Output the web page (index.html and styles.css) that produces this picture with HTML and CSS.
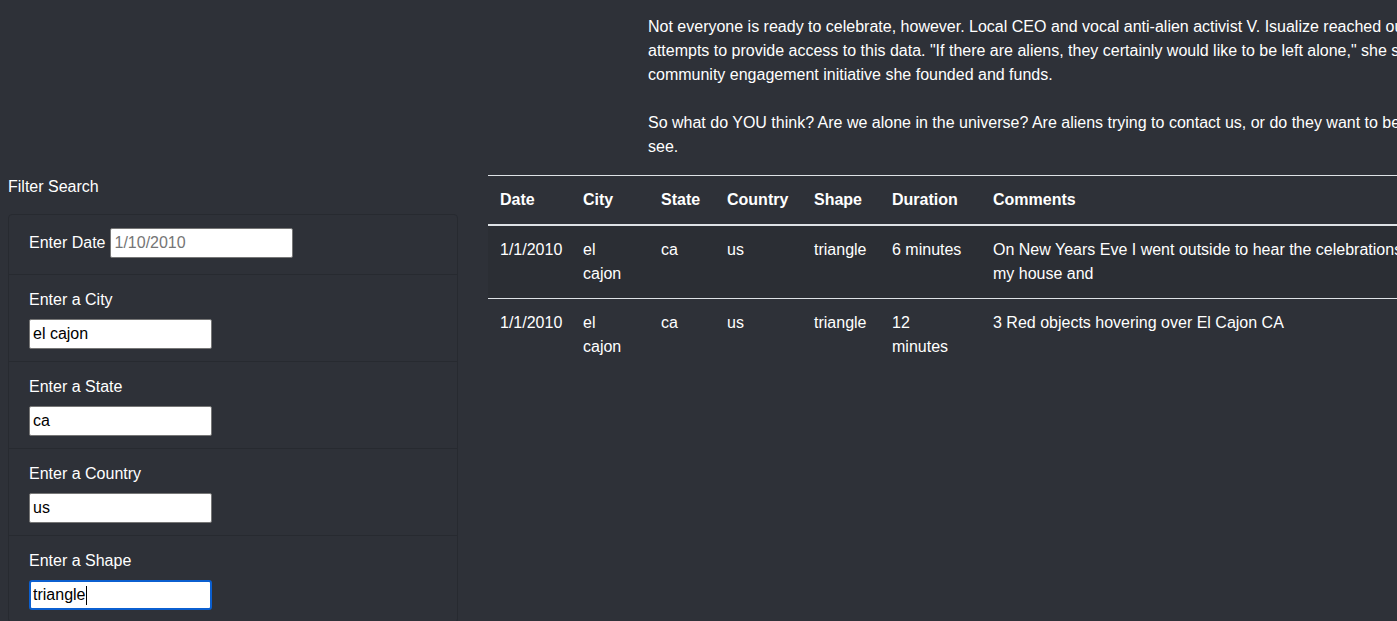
FILE: index.html
```html
<!DOCTYPE html>
<html lang="en">
<head>
<meta charset="utf-8">
<title>UFO Sightings</title>
<link rel="stylesheet" href="styles.css">
</head>
<body>
<div class="page">
  <section class="intro">
    <p class="story">
      <span class="line">Not everyone is ready to celebrate, however. Local CEO and vocal anti-alien activist V. Isualize reached out to criticize the</span>
      <span class="line">attempts to provide access to this data. "If there are aliens, they certainly would like to be left alone," she said in a press release for the</span>
      <span class="line">community engagement initiative she founded and funds.</span>
      <span class="line">&nbsp;</span>
      <span class="line">So what do YOU think? Are we alone in the universe? Are aliens trying to contact us, or do they want to be left alone? Dig through the data yourself and</span>
      <span class="line">see.</span>
    </p>
  </section>
  <section class="main-row">
    <aside class="filters">
      <div class="filters-title">Filter Search</div>
      <ul class="filter-list">
        <li class="filter-item filter-inline">
          <label class="filter-label" for="datetime">Enter Date</label>
          <input class="filter-input" id="datetime" type="text" placeholder="1/10/2010">
        </li>
        <li class="filter-item">
          <label class="filter-label block" for="city">Enter a City</label>
          <input class="filter-input" id="city" type="text" value="el cajon">
        </li>
        <li class="filter-item">
          <label class="filter-label block" for="state">Enter a State</label>
          <input class="filter-input" id="state" type="text" value="ca">
        </li>
        <li class="filter-item">
          <label class="filter-label block" for="country">Enter a Country</label>
          <input class="filter-input" id="country" type="text" value="us">
        </li>
        <li class="filter-item">
          <label class="filter-label block" for="shape">Enter a Shape</label>
          <span class="input-wrap">
            <input class="filter-input focused" id="shape" type="text" value="triangle">
            <span class="caret"></span>
          </span>
        </li>
      </ul>
    </aside>
    <main class="results">
      <table class="ufo-table">
        <colgroup>
          <col class="w-date">
          <col class="w-city">
          <col class="w-state">
          <col class="w-country">
          <col class="w-shape">
          <col class="w-dur">
          <col class="w-comm">
        </colgroup>
        <thead>
          <tr>
            <th>Date</th>
            <th>City</th>
            <th>State</th>
            <th>Country</th>
            <th>Shape</th>
            <th>Duration</th>
            <th>Comments</th>
          </tr>
        </thead>
        <tbody>
          <tr class="striped">
            <td>1/1/2010</td>
            <td>el cajon</td>
            <td>ca</td>
            <td>us</td>
            <td>triangle</td>
            <td>6 minutes</td>
            <td class="comment">On New Years Eve I went outside to hear the celebrations and saw 3 lights moving silently over<br>my house and</td>
          </tr>
          <tr>
            <td>1/1/2010</td>
            <td>el cajon</td>
            <td>ca</td>
            <td>us</td>
            <td>triangle</td>
            <td>12 minutes</td>
            <td class="comment">3 Red objects hovering over El Cajon CA</td>
          </tr>
        </tbody>
      </table>
    </main>
  </section>
</div>
</body>
</html>
```

FILE: styles.css
```css
html, body {
  margin: 0;
  padding: 0;
  overflow: hidden;
  background: #2e3138;
}

body {
  font-family: "Liberation Sans", Arial, sans-serif;
  font-size: 16px;
  line-height: 24px;
  color: #ffffff;
  width: 1397px;
  height: 621px;
}

.page {
  display: flex;
  flex-direction: column;
}

.intro {
  padding: 15px 0 0 648px;
}

.story {
  margin: 0 0 16px 0;
  white-space: nowrap;
}

.story .line {
  display: block;
  height: 24px;
}

.main-row {
  display: flex;
  align-items: flex-start;
}

.filters {
  width: 450px;
  margin-left: 8px;
  flex: none;
}

.filters-title {
  height: 24px;
  margin-bottom: 15px;
}

.filter-list {
  list-style: none;
  margin: 0;
  padding: 0;
  border: 1px solid #272a30;
  border-radius: 4px;
  background: #2e3138;
}

.filter-item {
  padding: 13px 20px 12px;
  border-top: 1px solid #272a30;
}

.filter-item:first-child {
  border-top: none;
}

.filter-inline {
  display: flex;
  align-items: center;
  gap: 5px;
  padding-top: 13px;
  padding-bottom: 16px;
}

.filter-label {
  display: inline-block;
}

.filter-label.block {
  display: block;
  margin-bottom: 7px;
}

.filter-input {
  display: block;
  box-sizing: border-box;
  width: 183px;
  height: 30px;
  padding: 1px 3px;
  margin: 0;
  border: 1px solid #767676;
  border-radius: 2px;
  background: #ffffff;
  color: #000000;
  font-family: "Liberation Sans", Arial, sans-serif;
  font-size: 16px;
  outline: none;
}

.filter-input::placeholder {
  color: #757575;
}

.input-wrap {
  position: relative;
  display: block;
  width: 183px;
}

.filter-input.focused {
  border: 2px solid #0b5fd0;
  border-radius: 3px;
  padding: 0 2px;
}

.caret {
  position: absolute;
  left: 57px;
  top: 6px;
  width: 1px;
  height: 19px;
  background: #000000;
}

.results {
  margin-left: 30px;
  flex: none;
}

.ufo-table {
  border-collapse: collapse;
  table-layout: fixed;
  width: 1217px;
}

.w-date { width: 83px; }
.w-city { width: 78px; }
.w-state { width: 66px; }
.w-country { width: 87px; }
.w-shape { width: 78px; }
.w-dur { width: 101px; }
.w-comm { width: 724px; }

.ufo-table th,
.ufo-table td {
  padding: 12px;
  text-align: left;
  vertical-align: top;
  border-top: 1px solid #dee2e6;
  overflow: visible;
}

.ufo-table th {
  font-weight: 700;
  border-bottom: 2px solid #dee2e6;
  white-space: nowrap;
}

.ufo-table tbody tr:first-child td {
  border-top: none;
}

.ufo-table td.comment {
  white-space: nowrap;
}

.striped {
  background: #2b2e34;
}
```
